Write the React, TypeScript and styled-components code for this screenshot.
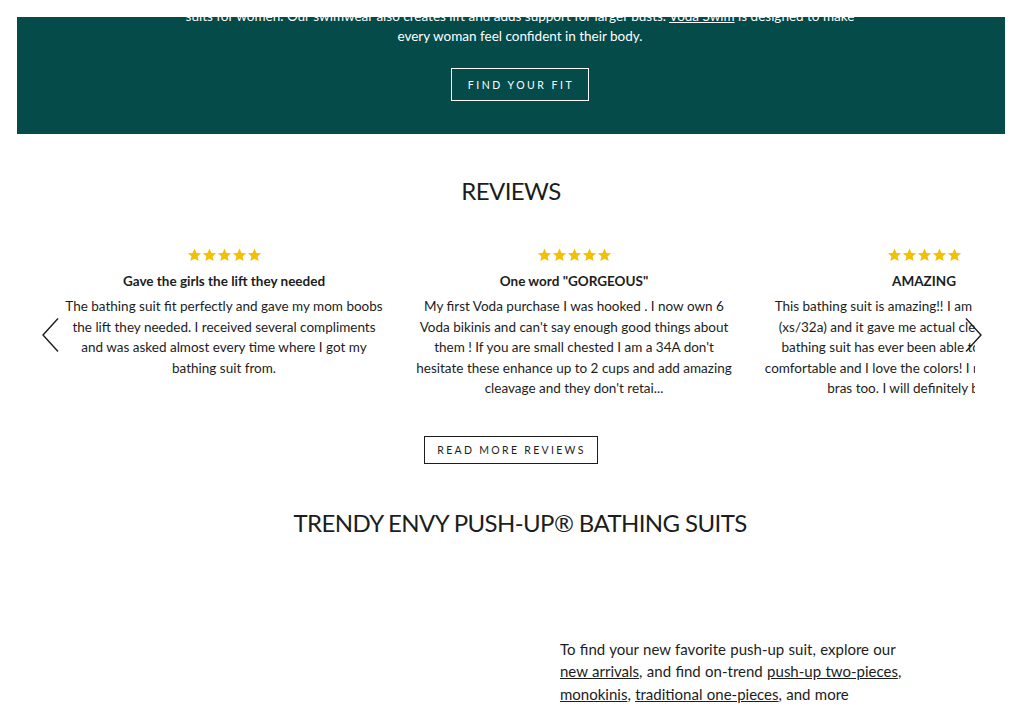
import styled, { createGlobalStyle } from "styled-components";

const GlobalStyle = createGlobalStyle`
  body {
    margin: 0;
    background: #ffffff;
    font-family: Lato, "Open Sans", sans-serif;
    color: #1c1d1d;
  }
`;

const Page = styled.div`
  padding: 17px 19px 0 17px;
  height: 706px;
  overflow: hidden;
`;

const Banner = styled.section`
  background: #044b4a;
  height: 117px;
  overflow: hidden;
  text-align: center;
  color: #ffffff;
`;

const BannerInner = styled.div`
  margin-top: -11px;
  padding-left: 18px;
  display: flex;
  flex-direction: column;
  align-items: center;
`;

const BannerText = styled.p`
  margin: 0;
  font-size: 13.5px;
  line-height: 20px;
  a {
    color: #ffffff;
  }
`;

const OutlineButton = styled.a<{ $light?: boolean }>`
  display: inline-flex;
  align-items: center;
  justify-content: center;
  box-sizing: border-box;
  height: ${(p) => (p.$light ? "33px" : "28px")};
  padding: 0 ${(p) => (p.$light ? "14px" : "11px")} 0
    ${(p) => (p.$light ? "16px" : "12px")};
  border: 1px solid ${(p) => (p.$light ? "#ffffff" : "#1c1d1d")};
  color: ${(p) => (p.$light ? "#ffffff" : "#1c1d1d")};
  font-size: 10.5px;
  letter-spacing: ${(p) => (p.$light ? "2.5px" : "2.3px")};
  text-transform: uppercase;
  text-decoration: none;
  margin-top: ${(p) => (p.$light ? "22px" : "0")};
`;

const Reviews = styled.section`
  display: flex;
  flex-direction: column;
  align-items: center;
  padding-top: 42px;
`;

const SectionTitle = styled.h2`
  margin: 0;
  font-size: 24px;
  font-weight: 400;
  line-height: 30px;
  text-transform: uppercase;
  letter-spacing: -0.6px;
`;

const Slider = styled.div`
  position: relative;
  align-self: stretch;
  margin-top: 42px;
  padding-left: 32px;
`;

const Track = styled.div`
  display: flex;
  width: 926px;
  overflow: hidden;
`;

const Card = styled.div`
  flex: 0 0 350px;
  box-sizing: border-box;
  padding: 0 15px;
  text-align: center;
`;

const Stars = styled.div`
  display: flex;
  justify-content: center;
  height: 15px;
`;

const CardTitle = styled.h3`
  margin: 8px 0 0;
  font-size: 13.5px;
  font-weight: 700;
  line-height: 20px;
`;

const CardBody = styled.p`
  margin: 5px 0 0;
  font-size: 13.5px;
  line-height: 20.5px;
`;

const Arrow = styled.button<{ $side: "left" | "right" }>`
  position: absolute;
  top: 70px;
  ${(p) => (p.$side === "left" ? "left: 25px;" : "left: 948px;")}
  padding: 0;
  border: none;
  background: none;
  line-height: 0;
`;

const MoreRow = styled.div`
  margin-top: 37px;
  display: flex;
  justify-content: center;
`;

const Trendy = styled.section`
  display: flex;
  flex-direction: column;
  align-items: center;
  padding-top: 44px;
`;

const TrendyTitle = styled(SectionTitle)`
  padding-left: 18px;
`;

const Split = styled.div`
  align-self: stretch;
  display: grid;
  grid-template-columns: 543px 1fr;
  margin-top: 100px;
`;

const ImageSlot = styled.div`
  min-height: 80px;
`;

const Copy = styled.p`
  margin: 0;
  max-width: 350px;
  font-size: 15px;
  line-height: 22.5px;
  letter-spacing: 0;
  word-spacing: 0.5px;
  a {
    color: inherit;
  }
`;

function Star() {
  return (
    <svg width="15" height="14" viewBox="0 1 24 22">
      <path
        fill="#f2c005"
        d="M12 1.5l3.1 7.1 7.6.6-5.8 5 1.8 7.5L12 17.8l-6.7 3.9 1.8-7.5-5.8-5 7.6-.6z"
      />
    </svg>
  );
}

function Chevron({ flip }: { flip?: boolean }) {
  return (
    <svg width="17" height="34" viewBox="0 0 17 34">
      <path
        d={flip ? "M1 0.5L16 17 1 33.5" : "M16 0.5L1 17l15 16.5"}
        fill="none"
        stroke="#1c1d1d"
        strokeWidth="1.4"
      />
    </svg>
  );
}

const reviews = [
  {
    title: "Gave the girls the lift they needed",
    body:
      "The bathing suit fit perfectly and gave my mom boobs the lift they needed. I received several compliments and was asked almost every time where I got my bathing suit from.",
  },
  {
    title: 'One word "GORGEOUS"',
    body:
      "My first Voda purchase I was hooked . I now own 6 Voda bikinis and can't say enough good things about them ! If you are small chested I am a 34A don't hesitate these enhance up to 2 cups and add amazing cleavage and they don't retai...",
  },
  {
    title: "AMAZING",
    body:
      "This bathing suit is amazing!! I am very flat chested (xs/32a) and it gave me actual cleavage. No other bathing suit has ever been able to do that. It's so comfortable and I love the colors! I need the matching bras too. I will definitely be back!",
  },
];

export default function App() {
  return (
    <>
      <GlobalStyle />
      <Page>
        <Banner>
          <BannerInner>
            <BannerText>
              suits for women. Our swimwear also creates lift and adds support
              for larger busts. <a href="#">Voda Swim</a> is designed to make
              <br />
              every woman feel confident in their body.
            </BannerText>
            <OutlineButton $light href="#">
              Find your fit
            </OutlineButton>
          </BannerInner>
        </Banner>

        <Reviews>
          <SectionTitle>Reviews</SectionTitle>
          <Slider>
            <Track>
              {reviews.map((r) => (
                <Card key={r.title}>
                  <Stars>
                    {[0, 1, 2, 3, 4].map((i) => (
                      <Star key={i} />
                    ))}
                  </Stars>
                  <CardTitle>{r.title}</CardTitle>
                  <CardBody>{r.body}</CardBody>
                </Card>
              ))}
            </Track>
            <Arrow $side="left" aria-label="Previous">
              <Chevron />
            </Arrow>
            <Arrow $side="right" aria-label="Next">
              <Chevron flip />
            </Arrow>
          </Slider>
          <MoreRow>
            <OutlineButton href="#">Read more reviews</OutlineButton>
          </MoreRow>
        </Reviews>

        <Trendy>
          <TrendyTitle>Trendy Envy Push-Up® Bathing Suits</TrendyTitle>
          <Split>
            <ImageSlot />
            <Copy>
              To find your new favorite push-up suit, explore our{" "}
              <a href="#">new arrivals</a>, and find on-trend{" "}
              <a href="#">push-up two-pieces</a>, <a href="#">monokinis</a>,{" "}
              <a href="#">traditional one-pieces</a>, and more
            </Copy>
          </Split>
        </Trendy>
      </Page>
    </>
  );
}
